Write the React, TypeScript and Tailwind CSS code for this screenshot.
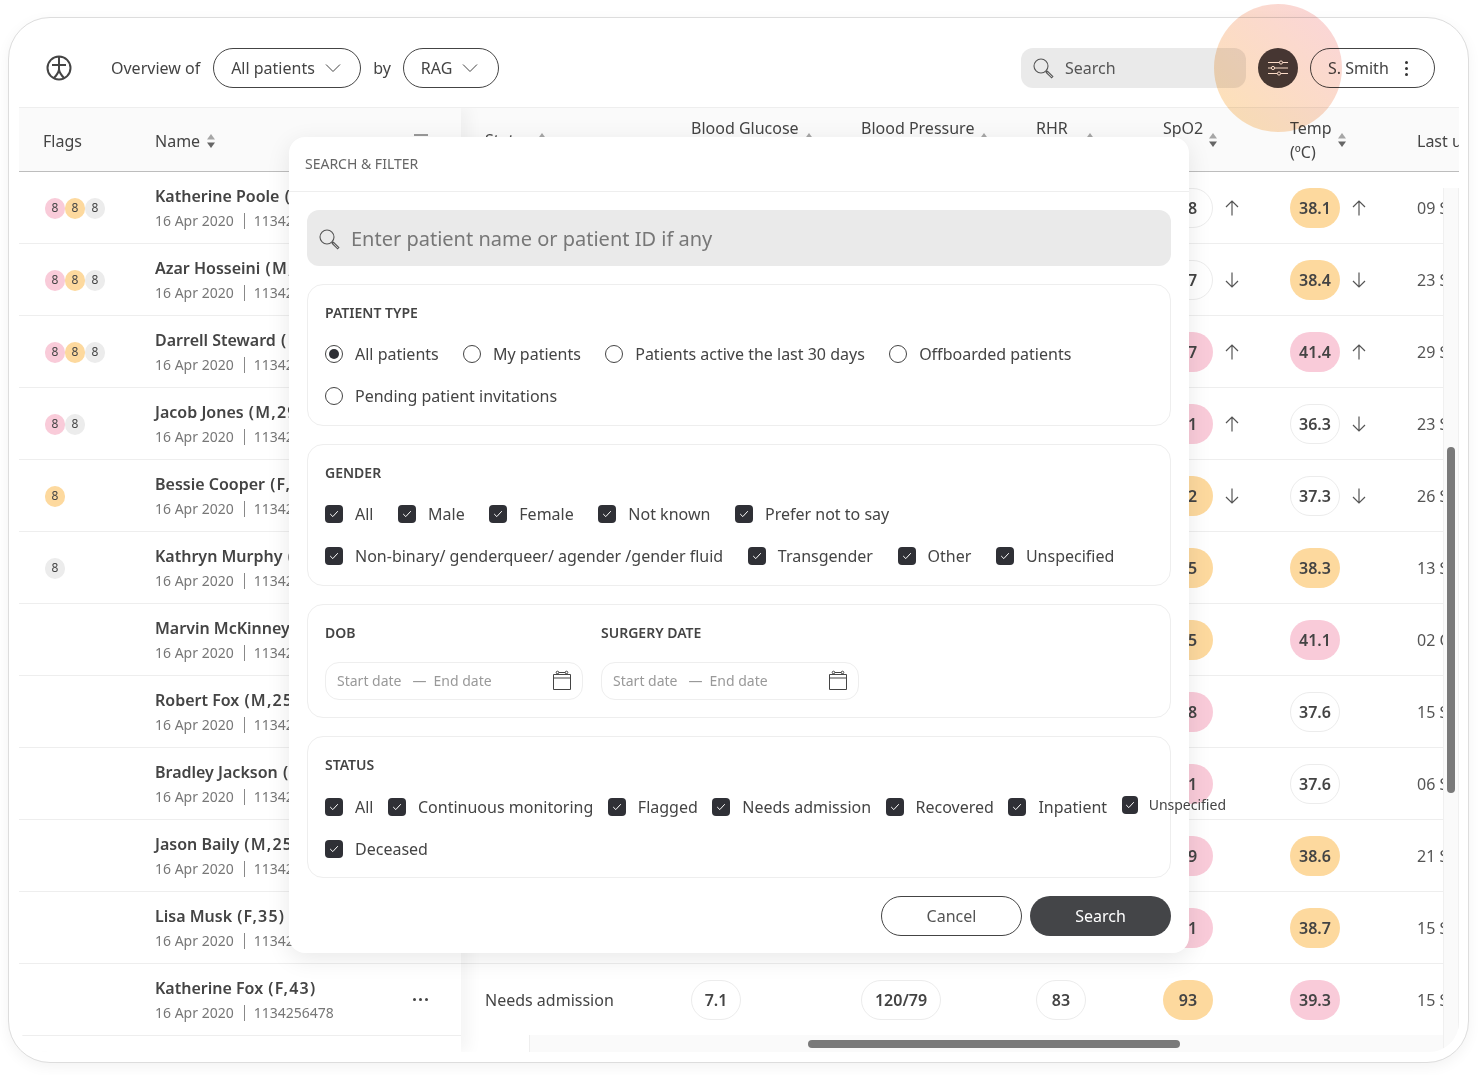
import React from "react";

type Tone = "w" | "o" | "p";
const tone: Record<Tone, string> = {
  w: "bg-white border border-[#ececec]",
  o: "bg-[#fdd99e]",
  p: "bg-[#f9cbd9]",
};

const rows: {
  name: string;
  info: string;
  flags: string[];
  spo: [string, Tone, string?];
  temp: [string, Tone, string?];
  last: string;
}[] = [
  { name: "Katherine Poole", info: "(F,43)", flags: ["p", "o", "g"], spo: ["98", "w", "u"], temp: ["38.1", "o", "u"], last: "09 Sep 2020" },
  { name: "Azar Hosseini", info: "(M,43)", flags: ["p", "o", "g"], spo: ["97", "w", "d"], temp: ["38.4", "o", "d"], last: "23 Sep 2020" },
  { name: "Darrell Steward", info: "(M,43)", flags: ["p", "o", "g"], spo: ["87", "p", "u"], temp: ["41.4", "p", "u"], last: "29 Sep 2020" },
  { name: "Jacob Jones", info: "(M,29)", flags: ["p", "g"], spo: ["81", "p", "u"], temp: ["36.3", "w", "d"], last: "23 Sep 2020" },
  { name: "Bessie Cooper", info: "(F,43)", flags: ["o"], spo: ["92", "o", "d"], temp: ["37.3", "w", "d"], last: "26 Sep 2020" },
  { name: "Kathryn Murphy", info: "(F,43)", flags: ["g"], spo: ["95", "o"], temp: ["38.3", "o"], last: "13 Sep 2020" },
  { name: "Marvin McKinney", info: "(M,43)", flags: [], spo: ["95", "o"], temp: ["41.1", "p"], last: "02 Oct 2020" },
  { name: "Robert Fox", info: "(M,25)", flags: [], spo: ["88", "p"], temp: ["37.6", "w"], last: "15 Sep 2020" },
  { name: "Bradley Jackson", info: "(M,43)", flags: [], spo: ["81", "p"], temp: ["37.6", "w"], last: "06 Sep 2020" },
  { name: "Jason Baily", info: "(M,25)", flags: [], spo: ["89", "p"], temp: ["38.6", "o"], last: "21 Sep 2020" },
  { name: "Lisa Musk", info: "(F,35)", flags: [], spo: ["81", "p"], temp: ["38.7", "o"], last: "15 Sep 2020" },
  { name: "Katherine Fox", info: "(F,43)", flags: [], spo: ["93", "o"], temp: ["39.3", "p"], last: "15 Sep 2020" },
];

const flagTone: Record<string, string> = { p: "bg-[#f9cbd9]", o: "bg-[#fdd99e]", g: "bg-[#ececec]" };

function Sort() {
  return (
    <svg width="8" height="14" viewBox="0 0 8 14" className="shrink-0">
      <path d="M4 0 8 5.5H0Z" fill="#a6a6a6" />
      <path d="M4 14 8 8.5H0Z" fill="#666666" />
    </svg>
  );
}

function Chevron() {
  return (
    <svg width="16" height="10" viewBox="0 0 16 10" fill="none" stroke="#444" strokeWidth="1">
      <path d="M1 1.5 8 8.5 15 1.5" />
    </svg>
  );
}

function SearchGlyph() {
  return (
    <svg width="21" height="21" viewBox="0 0 21 21" fill="none" stroke="#555" strokeWidth="1.1">
      <circle cx="8" cy="8" r="7" />
      <path d="M13 13 14.4 14.4M14.4 13.2 19.8 18.6 18.6 19.8 13.2 14.4Z" />
    </svg>
  );
}

function Arrow({ dir }: { dir: string }) {
  return (
    <svg width="14" height="16" viewBox="0 0 14 16" fill="none" stroke="#555" strokeWidth="1.2">
      {dir === "u" ? <path d="M7 15.5V1M1 7 7 1 13 7" /> : <path d="M7 .5V15M1 9 7 15 13 9" />}
    </svg>
  );
}

function Pill({ v, t, w = "w-[50px]" }: { v: string; t: Tone; w?: string }) {
  return (
    <div className={`${w} h-10 rounded-[20px] flex items-center justify-center font-semibold text-[16px] text-[#444] ${tone[t]}`}>
      {v}
    </div>
  );
}

function Box({ narrow }: { narrow?: boolean }) {
  return (
    <span className={`${narrow ? "w-4" : "w-[18px]"} h-[18px] shrink-0 rounded-[4px] bg-[#2f3036] flex items-center justify-center`}>
      <svg width="10" height="8" viewBox="0 0 10 8" fill="none" stroke="#fff" strokeWidth="1">
        <path d="M1.2 4 3.8 6.6 8.8 1.2" />
      </svg>
    </span>
  );
}

function Check({ label }: { label: string }) {
  return (
    <span className="flex items-center gap-3">
      <Box />
      <span className="whitespace-nowrap">{label}</span>
    </span>
  );
}

function Radio({ label, on }: { label: string; on?: boolean }) {
  return (
    <span className="flex items-center gap-3">
      <span className="w-[18px] h-[18px] shrink-0 rounded-full border border-[#444] flex items-center justify-center">
        {on && <span className="w-[10px] h-[10px] rounded-full bg-[#2f3036]" />}
      </span>
      <span className="whitespace-nowrap">{label}</span>
    </span>
  );
}

function Section({ children }: { children: React.ReactNode }) {
  return <div className="border border-[#eeeeee] rounded-[16px] px-[17px] pt-[18px] pb-[16px] text-[16px] text-[#444]">{children}</div>;
}

function Title({ children }: { children: React.ReactNode }) {
  return <div className="text-[14px] leading-5 font-semibold text-[#444]">{children}</div>;
}

function DateField() {
  return (
    <div className="w-[258px] h-[38px] rounded-[14px] border border-[#eeeeee] flex items-center pl-[11px] pr-[11px] pb-[2px] text-[14px] text-[#999]">
      <span>Start date</span>
      <span className="ml-[11px]">—</span>
      <span className="ml-[7px]">End date</span>
      <svg className="ml-auto" width="18" height="20" viewBox="0 0 18 20" fill="none" stroke="#444" strokeWidth="1">
        <path d="M.5 4.5H17.5V19.5H.5ZM.5 8H17.5" strokeWidth="1" />
        <path d="M4.5 4.5V2.5M13.5 4.5V2.5M4.5 2.5H13.5" />
        <circle cx="4.5" cy="2.5" r="1.3" fill="#fff" />
        <circle cx="13.5" cy="2.5" r="1.3" fill="#fff" />
      </svg>
    </div>
  );
}

function HeadCell({ w, l1, l2 }: { w: string; l1: string; l2?: string }) {
  return (
    <div className={`${w} shrink-0 flex items-center gap-[6px] text-[16px] leading-6 text-[#444]`}>
      <div className="whitespace-nowrap">
        <div>{l1}</div>
        {l2 && <div>{l2}</div>}
      </div>
      <Sort />
    </div>
  );
}

export default function App() {
  return (
    <div className="relative w-[1478px] h-[1075px] bg-white overflow-hidden font-['Noto_Sans',sans-serif] text-[#444] pl-[8px] pt-[17px]">
      <div className="w-[1461px] h-[1046px] rounded-[42px] border border-[#dddddd] shadow-[0_4px_14px_rgba(0,0,0,0.05)] bg-white pl-[10px] pr-[9px] flex flex-col">
        {/* Top bar */}
        <div className="h-[89px] shrink-0 flex items-center text-[16px] pl-[27px] pr-[24px] pt-[11px]">
          <svg width="26" height="26" viewBox="0 0 26 26" fill="none" stroke="#444" strokeWidth="2">
            <circle cx="13" cy="13" r="11.5" />
            <path d="M13 2V15M6 10H20M13 14.5C12.5 18 10 21 7.5 23.5M13 14.5C13.5 18 16 21 18.5 23.5" />
          </svg>
          <span className="ml-[39px]">Overview of</span>
          <div className="ml-[13px] w-[148px] h-10 rounded-full border border-[#444] flex items-center pl-[17px] gap-[10px]">
            <span>All patients</span>
            <Chevron />
          </div>
          <span className="ml-3">by</span>
          <div className="ml-3 w-24 h-10 rounded-full border border-[#444] flex items-center pl-[17px] gap-[10px]">
            <span>RAG</span>
            <Chevron />
          </div>
          <div className="ml-auto w-[225px] h-10 rounded-xl bg-[#eaeaea] flex items-center pl-3 gap-[11px]">
            <SearchGlyph />
            <span className="text-[#555]">Search</span>
          </div>
          <div className="ml-3 w-10 h-10 rounded-full bg-[#473f3f] flex items-center justify-center">
            <svg width="22" height="16" viewBox="0 0 22 16" fill="none" stroke="#ffffff" strokeWidth="1">
              <path d="M1 2.5H12.4M15.6 2.5H21M1 8H4.4M7.6 8H21M1 13.5H10.4M13.6 13.5H21" />
              <circle cx="14" cy="2.5" r="1.6" />
              <circle cx="6" cy="8" r="1.6" />
              <circle cx="12" cy="13.5" r="1.6" />
            </svg>
          </div>
          <div className="ml-3 w-[125px] h-10 rounded-full border border-[#444] flex items-center pl-[17px]">
            <span>S. Smith</span>
            <span className="ml-[16px] flex flex-col gap-[3px]">
              <i className="block w-[3px] h-[3px] rounded-full bg-[#333]" />
              <i className="block w-[3px] h-[3px] rounded-full bg-[#333]" />
              <i className="block w-[3px] h-[3px] rounded-full bg-[#333]" />
            </span>
          </div>
        </div>

        {/* Table */}
        <div className="relative w-[1440px] h-[945px] flex border-t border-[#eeeeee] rounded-b-[30px] overflow-hidden">
          {/* Sticky column */}
          <div className="relative z-10 w-[442px] shrink-0 bg-white shadow-[8px_0_14px_rgba(0,0,0,0.045)]">
            <div className="h-[64px] bg-[#fafafa] border-b border-[#bdbdbd] flex items-center text-[16px] pt-[2px]">
              <div className="w-[136px] pl-6">Flags</div>
              <div className="flex items-center gap-[7px]">
                Name <Sort />
              </div>
              <div className="ml-auto mr-[33px] flex flex-col gap-1 items-center">
                <i className="block w-[14px] h-[2px] bg-[#999]" />
                <i className="block w-[10px] h-[2px] bg-[#999]" />
                <i className="block w-[6px] h-[2px] bg-[#999]" />
              </div>
            </div>
            {rows.map((r) => (
              <div key={r.name} className="h-[72px] border-b border-[#eeeeee] flex items-center">
                <div className="w-[136px] pl-[26px] flex mt-px">
                  {r.flags.map((f, i) => (
                    <span key={i} className={`w-[20px] h-[21px] rounded-full ${flagTone[f]} text-[12px] flex items-center justify-center text-[#444]`}>
                      8
                    </span>
                  ))}
                </div>
                <div className="mt-px">
                  <div className="text-[16px] leading-6 font-semibold whitespace-nowrap">
                    {r.name} <span className="ml-px tracking-[1.2px]">{r.info}</span>
                  </div>
                  <div className="flex items-center text-[14px] leading-6 text-[#777] mt-px">
                    <span>16 Apr 2020</span>
                    <i className="block w-px h-4 bg-[#888] ml-[10px] mr-[9px]" />
                    <span>1134256478</span>
                  </div>
                </div>
                <div className="ml-auto mr-[33px] flex gap-[3px]">
                  <i className="block w-[3px] h-[3px] rounded-full bg-[#444]" />
                  <i className="block w-[3px] h-[3px] rounded-full bg-[#444]" />
                  <i className="block w-[3px] h-[3px] rounded-full bg-[#444]" />
                </div>
              </div>
            ))}
            <div className="h-[16px]" />
          </div>

          {/* Scrolling columns */}
          <div className="flex-1 min-w-0 flex flex-col">
            <div className="h-[64px] shrink-0 bg-[#fafafa] border-b border-[#bdbdbd] flex items-center pl-6 overflow-hidden">
              <HeadCell w="w-[206px]" l1="Status" />
              <HeadCell w="w-[170px]" l1="Blood Glucose" l2="(mmol/L)" />
              <HeadCell w="w-[175px]" l1="Blood Pressure" l2="(mmHg)" />
              <HeadCell w="w-[127px]" l1="RHR" l2="(BPM)" />
              <HeadCell w="w-[127px]" l1="SpO2" l2="(%)" />
              <HeadCell w="w-[127px]" l1="Temp" l2="(ºC)" />
              <div className="shrink-0 whitespace-nowrap text-[16px] pt-[2px]">Last update</div>
            </div>
            <div className="w-[982px] flex-1 min-h-0 overflow-hidden">
              {rows.map((r) => (
                <div key={r.name} className="h-[72px] border-b border-[#eeeeee] flex items-center pl-6 text-[16px] whitespace-nowrap">
                  <div className="w-[206px] shrink-0">Needs admission</div>
                  <div className="w-[170px] shrink-0">
                    <Pill v="7.1" t="w" />
                  </div>
                  <div className="w-[175px] shrink-0">
                    <Pill v="120/79" t="w" w="w-[80px]" />
                  </div>
                  <div className="w-[127px] shrink-0">
                    <Pill v="83" t="w" />
                  </div>
                  <div className="w-[127px] shrink-0 flex items-center gap-3">
                    <Pill v={r.spo[0]} t={r.spo[1]} />
                    {r.spo[2] && <Arrow dir={r.spo[2]} />}
                  </div>
                  <div className="w-[127px] shrink-0 flex items-center gap-3">
                    <Pill v={r.temp[0]} t={r.temp[1]} />
                    {r.temp[2] && <Arrow dir={r.temp[2]} />}
                  </div>
                  <div className="shrink-0 text-[#555]">{r.last}</div>
                </div>
              ))}
            </div>
            <div className="h-[17px] shrink-0 flex">
              <div className="w-[68px] shrink-0 bg-white" />
              <div className="flex-1 bg-[#fafafa] border-l border-[#eeeeee]" />
            </div>
          </div>

          {/* Scrollbars lying over the table */}
          <div className="absolute z-20 right-0 top-[80px] bottom-0 w-[16px] bg-[#fafafa] border-l border-[#f0f0f0] border-r">
            <div className="absolute left-[3px] top-[259px] w-2 h-[346px] rounded-full bg-[#7a7a7a]" />
          </div>
          <div className="absolute z-20 left-[789px] top-[932px] w-[372px] h-2 rounded-full bg-[#7a7a7a]" />
        </div>
      </div>

      {/* Click highlight */}
      <div className="absolute z-30 left-[1214px] top-[4px] w-[128px] h-[128px] rounded-full bg-gradient-to-tr from-[#fde2b4] to-[#fad4da] mix-blend-multiply" />

      {/* Search and filter dialog */}
      <div className="absolute z-40 left-[289px] top-[137px] w-[900px] h-[816px] bg-white rounded-[16px] shadow-[0_6px_24px_rgba(0,0,0,0.09)] flex flex-col">
        <div className="h-[55px] shrink-0 border-b border-[#eeeeee] flex items-center pl-4 pb-[2px] text-[14px] text-[#666]">
          SEARCH &amp; FILTER
        </div>
        <div className="flex-1 px-[18px] pt-[18px] flex flex-col gap-[18px]">
          <div className="h-[56px] rounded-xl bg-[#eaeaea] flex items-center pl-3 gap-[11px] pt-[2px] text-[20px] text-[#777]">
            <SearchGlyph />
            <span>Enter patient name or patient ID if any</span>
          </div>
          <Section>
            <Title>PATIENT TYPE</Title>
            <div className="mt-[19px] flex flex-col gap-[18px] pb-px">
              <div className="flex gap-[24.3px] leading-6">
                <Radio label="All patients" on />
                <Radio label="My patients" />
                <Radio label="Patients active the last 30 days" />
                <Radio label="Offboarded patients" />
              </div>
              <div className="flex leading-6">
                <Radio label="Pending patient invitations" />
              </div>
            </div>
          </Section>
          <Section>
            <Title>GENDER</Title>
            <div className="mt-[19px] flex flex-col gap-[18px] leading-6 pb-px">
              <div className="flex gap-[24.6px]">
                <Check label="All" />
                <Check label="Male" />
                <Check label="Female" />
                <Check label="Not known" />
                <Check label="Prefer not to say" />
              </div>
              <div className="flex gap-[24.6px]">
                <Check label="Non-binary/ genderqueer/ agender /gender fluid" />
                <Check label="Transgender" />
                <Check label="Other" />
                <Check label="Unspecified" />
              </div>
            </div>
          </Section>
          <Section>
            <div className="flex gap-[18px] pb-px">
              <div>
                <Title>DOB</Title>
                <div className="mt-[19px]">
                  <DateField />
                </div>
              </div>
              <div>
                <Title>SURGERY DATE</Title>
                <div className="mt-[19px]">
                  <DateField />
                </div>
              </div>
            </div>
          </Section>
          <Section>
            <Title>STATUS</Title>
            <div className="mt-[20px] flex flex-col gap-[18px] leading-6">
              <div className="flex gap-[14.5px]">
                <Check label="All" />
                <Check label="Continuous monitoring" />
                <Check label="Flagged" />
                <Check label="Needs admission" />
                <Check label="Recovered" />
                <Check label="Inpatient" />
                <span className="flex items-center gap-[11px] text-[14px] -mt-[4px]">
                  <Box narrow />
                  <span className="whitespace-nowrap">Unspecified</span>
                </span>
              </div>
              <div className="flex">
                <Check label="Deceased" />
              </div>
            </div>
          </Section>
          <div className="flex justify-end gap-2 text-[16px]">
            <div className="w-[141px] h-10 rounded-full border border-[#444] flex items-center justify-center text-[#555]">Cancel</div>
            <div className="w-[141px] h-10 rounded-full bg-[#444548] flex items-center justify-center text-white">Search</div>
          </div>
        </div>
      </div>
    </div>
  );
}
